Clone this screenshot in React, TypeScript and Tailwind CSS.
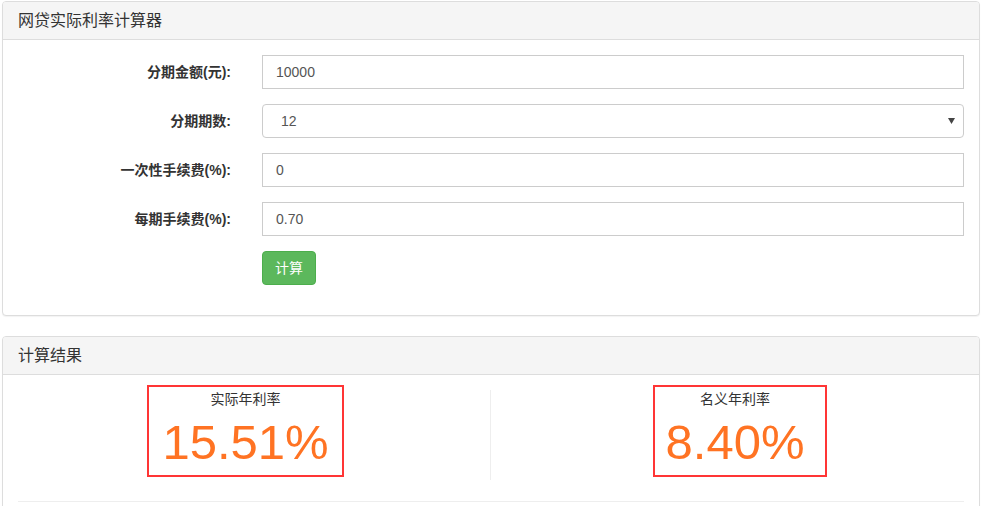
import React from "react";

const font = {
  fontFamily: '"Liberation Sans", "Noto Sans CJK SC", sans-serif',
};

function Panel({ title, children }: { title: string; children: React.ReactNode }) {
  return (
    <div className="rounded-[4px] border border-[#ddd] bg-white shadow-[0_1px_1px_rgba(0,0,0,0.05)]">
      <div className="rounded-t-[3px] border-b border-[#ddd] bg-[#f5f5f5] px-[15px] py-[10px] text-[16px] leading-[17px] text-[#333]">
        {title}
      </div>
      {children}
    </div>
  );
}

function FormRow({ label, children }: { label: string; children: React.ReactNode }) {
  return (
    <div className="mb-[15px] flex h-[34px] items-center">
      <label className="w-[213px] text-right text-[14px] font-bold text-[#333]">{label}</label>
      <div className="ml-[31px] flex-1">{children}</div>
    </div>
  );
}

function TextInput({ value }: { value: string }) {
  return (
    <div className="flex h-[34px] items-center border border-[#ccc] bg-white px-[13px] text-[14px] text-[#555]">
      {value}
    </div>
  );
}

function ResultBox({ label, value, className }: { label: string; value: string; className: string }) {
  return (
    <div className={`-mt-[5px] h-[92px] border-2 border-[#ff3535] text-center ${className}`}>
      <div className="pt-[2px] text-[14px] leading-[20px] text-[#333]">{label}</div>
      <div className="mt-[5px] text-[49px] leading-[56px] text-[#ff7323]">{value}</div>
    </div>
  );
}

export default function App() {
  return (
    <div className="h-[506px] w-[984px] overflow-hidden bg-white pl-[2px] pt-[1px]" style={font}>
      <div className="w-[978px]">
        <Panel title="网贷实际利率计算器">
          <div className="p-[15px]">
            <FormRow label="分期金额(元):">
              <TextInput value="10000" />
            </FormRow>
            <FormRow label="分期期数:">
              <div className="flex h-[34px] items-center justify-between rounded-[4px] border border-[#ccc] bg-white pl-[18px] pr-[8px] text-[14px] text-[#555]">
                <span>12</span>
                <svg width="7" height="6" viewBox="0 0 7 6">
                  <path d="M0 0h7L3.5 6z" fill="#444" />
                </svg>
              </div>
            </FormRow>
            <FormRow label="一次性手续费(%):">
              <TextInput value="0" />
            </FormRow>
            <FormRow label="每期手续费(%):">
              <TextInput value="0.70" />
            </FormRow>
            <div className="mb-[15px] flex h-[34px]">
              <div className="ml-[244px]">
                <button className="h-[34px] rounded-[4px] border border-[#4cae4c] bg-[#5cb85c] px-[12px] text-[14px] text-white">
                  计算
                </button>
              </div>
            </div>
          </div>
        </Panel>

        <div className="mt-[20px]">
          <Panel title="计算结果">
            <div className="px-[15px] pt-[15px]">
              <div className="flex h-[90px]">
                <div className="w-[472px] pl-[129px]">
                  <ResultBox label="实际年利率" value="15.51%" className="w-[197px]" />
                </div>
                <div className="flex-1 border-l border-[#eee] pl-[162px]">
                  <ResultBox label="名义年利率" value="8.40%" className="w-[174px] pr-[10px]" />
                </div>
              </div>
              <div className="mt-[21px] border-t border-[#eee]" />
              <div className="h-[20px]" />
            </div>
          </Panel>
        </div>
      </div>
    </div>
  );
}
